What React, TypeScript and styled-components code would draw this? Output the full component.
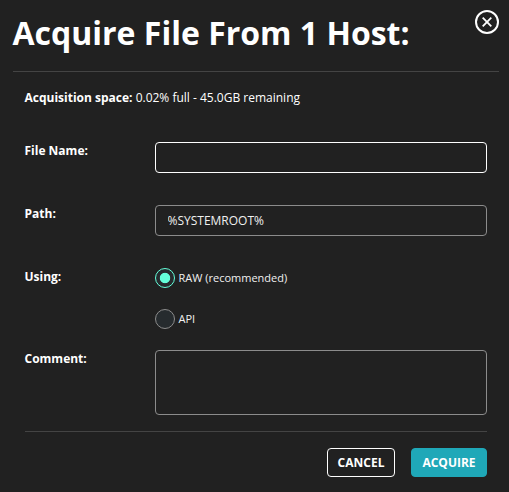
import React, { useState } from 'react';
import styled, { createGlobalStyle } from 'styled-components';

const GlobalStyle = createGlobalStyle`
  *, *::before, *::after { box-sizing: border-box; }
  body { margin: 0; background: #212121; }
`;

const Dialog = styled.form`
  width: 509px;
  height: 492px;
  padding: 10px 10px 0 12.5px;
  background: #212121;
  color: #fff;
  font: 12px/16px "Open Sans", sans-serif;
  -webkit-font-smoothing: antialiased;
  overflow: hidden;
`;

const Header = styled.header`
  display: flex;
  justify-content: space-between;
  height: 62px;
  border-bottom: 1px solid #444;
`;

const Title = styled.h1`
  margin: 1px 0 0;
  font-size: 32px;
  line-height: 44px;
  font-weight: 700;
  white-space: nowrap;
`;

const CloseButton = styled.button`
  width: 24px;
  height: 24px;
  padding: 0;
  border: 0;
  background: none;
  color: #fff;
  svg { display: block; }
`;

const Content = styled.div`
  padding: 18px 12px 0 12px;
`;

const Space = styled.p`
  margin: 0;
  height: 52px;
`;

const Row = styled.div<{ $height: number }>`
  display: grid;
  grid-template-columns: 130.5px 332px;
  height: ${(p) => p.$height}px;
`;

const Label = styled.label`
  padding-top: 1px;
  font-weight: 700;
`;

const Input = styled.input<{ $active?: boolean }>`
  height: 31px;
  width: 100%;
  padding: 0 11.5px;
  border: 1px solid ${(p) => (p.$active ? '#fff' : '#8c8c8c')};
  border-radius: 4px;
  background: transparent;
  color: #f0f0f0;
  font: inherit;
  outline: 0;
`;

const TextArea = styled.textarea`
  width: 100%;
  height: 65px;
  padding: 6px 12px;
  border: 1px solid #8c8c8c;
  border-radius: 4px;
  background: transparent;
  color: #f0f0f0;
  font: inherit;
  outline: 0;
  resize: none;
`;

const Options = styled.div`
  display: flex;
  flex-direction: column;
  gap: 21px;
`;

const Option = styled.label`
  display: flex;
  align-items: center;
  gap: 3.5px;
  height: 20px;
  font-size: 11px;
  color: #f0f0f0;
`;

const Radio = styled.input`
  appearance: none;
  width: 20px;
  height: 20px;
  margin: 0;
  border: 1px solid #8c8c8c;
  border-radius: 50%;
  background: #262b2e;
  &:checked {
    border-color: #64ffda;
    background: radial-gradient(circle, #64ffda 4.8px, #262b2e 5.6px);
  }
`;

const Footer = styled.footer`
  display: flex;
  justify-content: flex-end;
  gap: 16px;
  margin: 0 12px 0 12px;
  padding-top: 16px;
  border-top: 1px solid #444;
`;

const Button = styled.button<{ $primary?: boolean }>`
  width: ${(p) => (p.$primary ? 76 : 68)}px;
  height: 29px;
  padding: 0;
  border: 1px solid ${(p) => (p.$primary ? '#1fa8b8' : '#fff')};
  border-radius: 4px;
  background: ${(p) => (p.$primary ? '#1fa8b8' : 'transparent')};
  color: #fff;
  font: 700 12px/16px "Open Sans", sans-serif;
`;

export default function App() {
  const [method, setMethod] = useState('raw');
  return (
    <Dialog onSubmit={(e) => e.preventDefault()}>
      <GlobalStyle />
      <Header>
        <Title>Acquire File From 1 Host:</Title>
        <CloseButton type="button" aria-label="Close">
          <svg width="24" height="24" viewBox="0 0 24 24" fill="none" stroke="currentColor">
            <circle cx="12" cy="12" r="11" strokeWidth="2" />
            <path d="M7.7 7.7l8.6 8.6m0-8.6l-8.6 8.6" strokeWidth="1.8" />
          </svg>
        </CloseButton>
      </Header>
      <Content>
        <Space><b>Acquisition space:</b> 0.02% full - 45.0GB remaining</Space>
        <Row $height={63}>
          <Label htmlFor="name">File Name:</Label>
          <Input id="name" $active />
        </Row>
        <Row $height={63}>
          <Label htmlFor="path">Path:</Label>
          <Input id="path" defaultValue="%SYSTEMROOT%" />
        </Row>
        <Row $height={82}>
          <Label as="span">Using:</Label>
          <Options>
            <Option><Radio type="radio" name="method" checked={method === 'raw'} onChange={() => setMethod('raw')} />RAW (recommended)</Option>
            <Option><Radio type="radio" name="method" checked={method === 'api'} onChange={() => setMethod('api')} />API</Option>
          </Options>
        </Row>
        <Row $height={81}>
          <Label htmlFor="comment">Comment:</Label>
          <TextArea id="comment" />
        </Row>
      </Content>
      <Footer>
        <Button type="button">CANCEL</Button>
        <Button $primary>ACQUIRE</Button>
      </Footer>
    </Dialog>
  );
}
